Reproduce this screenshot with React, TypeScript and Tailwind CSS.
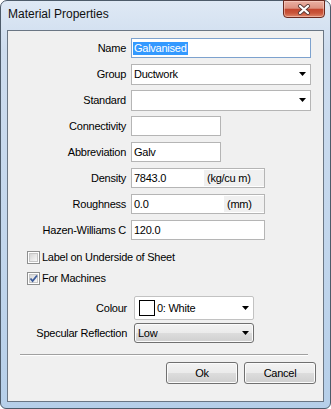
import type { ReactNode } from "react";

const Arrow = () => (
  <svg width="7" height="4" viewBox="0 0 7 4" className="shrink-0">
    <path d="M0 0H7L3.5 4Z" fill="#000" />
  </svg>
);

const Label = ({ children }: { children: ReactNode }) => (
  <span className="w-[118px] shrink-0 text-right">{children}</span>
);

const Field = ({
  className,
  children,
}: {
  className: string;
  children?: ReactNode;
}) => (
  <div
    className={`h-[20px] ml-[5px] border bg-white flex items-center pl-[2px] ${className}`}
  >
    {children}
  </div>
);

const Unit = ({ width, children }: { width: string; children: ReactNode }) => (
  <span
    className={`ml-auto h-[16px] bg-[#f0f0f0] flex items-center pl-[3px] ${width}`}
  >
    {children}
  </span>
);

const Check = ({ checked }: { checked: boolean }) => (
  <span className="w-[13px] h-[13px] shrink-0 border border-[#8e8f8f] bg-white p-px">
    <span className="block w-full h-full bg-[linear-gradient(135deg,#d6d6d6,#f8f8f8)] border border-[#c6c6c6]">
      {checked && (
        <svg width="9" height="9" viewBox="0 0 9 9" className="-ml-px -mt-px">
          <path
            d="M1.5 4.5L3.6 7L8 1.5"
            fill="none"
            stroke="#3b5b9a"
            strokeWidth="1.8"
          />
        </svg>
      )}
    </span>
  </span>
);

const Button = ({ children }: { children: ReactNode }) => (
  <button
    type="button"
    className="w-[72px] h-[22px] rounded-[3px] border border-[#707070] shadow-[inset_0_0_0_1px_#fbfbfb] bg-[linear-gradient(to_bottom,#f3f3f3_0%,#ebebeb_50%,#dddddd_50%,#cfcfcf_100%)] text-black"
  >
    {children}
  </button>
);

const App = () => {
  return (
    <div className="w-[331px] h-[409px] flex flex-col px-[6px] pb-[6px] rounded-t-[7px] rounded-b-[6px] border border-[#4d5b6a] bg-[linear-gradient(to_bottom,#dfe9f5_0%,#cddcee_12%,#c2d6ec_60%,#b6cfe9_100%)] font-['Liberation_Sans',Arial,sans-serif] text-[11px] tracking-[-0.25px] text-black">
      <div className="h-[29px] flex items-start justify-between">
        <span className="pt-[6px] pl-px leading-[14px] text-[12px] tracking-normal text-[#101010]">
          Material Properties
        </span>
        <div className="-mt-px mr-[-1px] w-[42px] h-[18px] rounded-b-[4px] border border-[#6b2a20] bg-[linear-gradient(to_bottom,#eab0a3_0%,#dd9281_45%,#c4472f_52%,#c9553a_75%,#e0866a_100%)] shadow-[inset_0_0_0_1px_rgba(255,220,210,0.5)] flex items-center justify-center">
          <svg width="14" height="11" viewBox="0 0 14 11">
            <path
              d="M3 2L11 9M11 2L3 9"
              stroke="#5a3a36"
              strokeWidth="4"
              strokeLinecap="round"
            />
            <path
              d="M3 2L11 9M11 2L3 9"
              stroke="#ffffff"
              strokeWidth="2.3"
              strokeLinecap="round"
            />
          </svg>
        </div>
      </div>

      <div className="flex-1 flex flex-col border border-[#6a7684] bg-[#f0f0f0] pt-[7px]">
        <div className="flex flex-col gap-[6px]">
          <div className="flex items-center h-[20px]">
            <Label>Name</Label>
            <Field className="w-[180px] border-[#7da2ce] pl-px">
              <span className="bg-[#3399ff] text-white px-px leading-[13px]">
                Galvanised
              </span>
            </Field>
          </div>
          <div className="flex items-center h-[20px]">
            <Label>Group</Label>
            <Field className="w-[180px] h-[21px] border-[#b5b5b5] justify-between pr-[4px]">
              <span>Ductwork</span>
              <Arrow />
            </Field>
          </div>
          <div className="flex items-center h-[20px]">
            <Label>Standard</Label>
            <Field className="w-[180px] h-[21px] border-[#b5b5b5] justify-end pr-[4px]">
              <Arrow />
            </Field>
          </div>
          <div className="flex items-center h-[20px]">
            <Label>Connectivity</Label>
            <Field className="w-[90px] border-[#b5b5b5]" />
          </div>
          <div className="flex items-center h-[20px]">
            <Label>Abbreviation</Label>
            <Field className="w-[90px] border-[#b5b5b5]">Galv</Field>
          </div>
          <div className="flex items-center h-[20px]">
            <Label>Density</Label>
            <Field className="w-[134px] border-[#b5b5b5]">
              <span>7843.0</span>
              <Unit width="w-[60px]">(kg/cu m)</Unit>
            </Field>
          </div>
          <div className="flex items-center h-[20px]">
            <Label>Roughness</Label>
            <Field className="w-[134px] border-[#b5b5b5]">
              <span>0.0</span>
              <Unit width="w-[40px]">(mm)</Unit>
            </Field>
          </div>
          <div className="flex items-center h-[20px]">
            <Label>Hazen-Williams C</Label>
            <Field className="w-[134px] border-[#b5b5b5]">120.0</Field>
          </div>
        </div>

        <div className="flex flex-col gap-[8px] mt-[11px] pl-[19px]">
          <div className="flex items-center gap-[2px] h-[13px]">
            <Check checked={false} />
            <span>Label on Underside of Sheet</span>
          </div>
          <div className="flex items-center gap-[2px] h-[13px]">
            <Check checked={true} />
            <span>For Machines</span>
          </div>
        </div>

        <div className="flex items-start mt-[11px]">
          <span className="w-[119px] text-right pt-[4px]">Colour</span>
          <div className="ml-[7px] w-[120px] h-[24px] rounded-[2px] border border-[#c2c2c2] bg-white flex items-center pl-[4px] pr-[4px]">
            <span className="w-[16px] h-[16px] border border-black bg-white shrink-0" />
            <span className="ml-[2px]">0: White</span>
            <span className="ml-auto">
              <Arrow />
            </span>
          </div>
        </div>
        <div className="flex items-start mt-[3px]">
          <span className="w-[119px] text-right pt-[2px]">
            Specular Reflection
          </span>
          <div className="ml-[7px] w-[120px] h-[20px] rounded-[3px] border border-[#707070] shadow-[inset_0_0_0_1px_#fbfbfb] bg-[linear-gradient(to_bottom,#f3f3f3_0%,#ebebeb_50%,#dddddd_50%,#cfcfcf_100%)] flex items-center pl-[3px] pr-[4px]">
            <span>Low</span>
            <span className="ml-auto">
              <Arrow />
            </span>
          </div>
        </div>

        <div className="mt-[11px] ml-[12px] w-[288px] border-t border-t-[#a0a0a0] border-b border-b-white" />

        <div className="flex justify-end gap-[6px] mt-[6px] pr-[7px]">
          <Button>Ok</Button>
          <Button>Cancel</Button>
        </div>
      </div>
    </div>
  );
};

export default App;
